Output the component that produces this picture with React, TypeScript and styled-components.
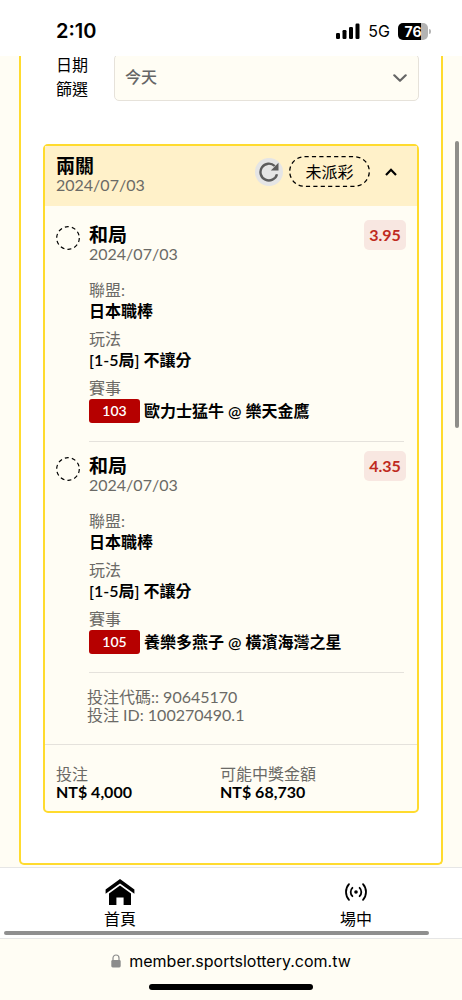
import React from "react";
import styled, { createGlobalStyle } from "styled-components";

const GlobalStyle = createGlobalStyle`
  *, *::before, *::after { box-sizing: border-box; }
  body {
    margin: 0;
    background: #fffdf4;
    color: #000;
    font-family: Lato, "Noto Sans CJK TC", sans-serif;
    font-size: 16px;
    line-height: 20px;
  }
  h2, h3, p, dl, dt, dd { margin: 0; font: inherit; }
  button, select { font: inherit; color: inherit; }
`;

const Screen = styled.div`
  position: relative;
  display: flex;
  flex-direction: column;
  min-height: 100vh;
`;

const StatusBar = styled.header`
  position: relative;
  z-index: 1;
  display: flex;
  align-items: center;
  justify-content: space-between;
  height: 56px;
  padding: 6px 34px 0 56px;
  background: #fff;
  font-family: Inter, sans-serif;
`;

const Clock = styled.time`
  font-size: 20px;
  font-weight: 600;
`;

const Indicators = styled.div`
  display: flex;
  align-items: center;
  gap: 8px;
`;

const Battery = styled.div`
  position: relative;
  width: 30px;
  height: 17px;
  border-radius: 5px;
  background: linear-gradient(to right, #000 76%, #b3b3b3 76%);
  color: #fff;
  font-size: 14px;
  font-weight: 700;
  line-height: 17px;
  text-align: center;

  &::after {
    content: "";
    position: absolute;
    top: 6px;
    right: -3px;
    width: 2px;
    height: 5px;
    border-radius: 0 2px 2px 0;
    background: #b3b3b3;
  }
`;

const Panel = styled.main`
  margin: -3px 19px 2px;
  padding: 0 22px 50px;
  border: 2px solid #ffdb2e;
  border-top: 0;
  border-radius: 0 0 5px 5px;
  background: #fff;
`;

const Filter = styled.div`
  display: flex;
  align-items: center;
  gap: 26px;
  margin-bottom: 43px;
  padding-left: 13px;
`;

const FilterLabel = styled.label`
  width: 32px;
  line-height: 24px;
`;

const SelectBox = styled.div`
  position: relative;
  flex: 1;

  svg {
    position: absolute;
    top: 18px;
    right: 12px;
    pointer-events: none;
  }
`;

const Select = styled.select`
  appearance: none;
  display: block;
  width: 100%;
  height: 47px;
  padding: 0 10px;
  border: 1px solid #e6e2da;
  border-radius: 5px;
  background: #fffdf4;
  color: #666;
  font-weight: 500;
`;

const Card = styled.article`
  border: 2px solid #ffdb2e;
  border-radius: 5px;
  background: #fffdf4;
`;

const CardHeader = styled.header`
  display: flex;
  align-items: flex-start;
  justify-content: space-between;
  height: 60px;
  padding: 10px 19px 0 11px;
  background: #fff1c9;
`;

const Title = styled.h2`
  font-size: 19px;
  font-weight: 700;
`;

const Muted = styled.p`
  color: #6b6a66;
  line-height: 18px;
`;

const Actions = styled.div`
  display: flex;
  align-items: center;
`;

const IconButton = styled.button<{ $round?: boolean }>`
  display: flex;
  align-items: center;
  justify-content: center;
  width: ${(p) => (p.$round ? "28px" : "14px")};
  height: 28px;
  padding: 0;
  border: 0;
  border-radius: 14px;
  background: ${(p) => (p.$round ? "#e5e5e5" : "none")};
`;

const Pill = styled.span`
  position: relative;
  width: 81px;
  margin: 0 14px 0 6px;
  line-height: 31px;
  text-align: center;

  svg {
    position: absolute;
    inset: 0;
    width: 100%;
    height: 100%;
  }
`;

const Bet = styled.section`
  display: grid;
  grid-template-columns: 33px 1fr;
  padding: 14px 13px 0 11px;

  & + & {
    padding-top: 9px;
  }
`;

const Ring = styled.svg`
  width: 24px;
  height: 24px;
  margin-top: 6px;
`;

const BetBody = styled.div`
  padding-bottom: 18px;
  border-bottom: 1px solid #e5e2dc;
`;

const BetHead = styled.div`
  display: flex;
  align-items: flex-start;
  justify-content: space-between;
  height: 59px;
  margin-right: -2px;
`;

const BetName = styled.div`
  padding-top: 5px;
`;

const Odds = styled.strong`
  width: 42px;
  border-radius: 5px;
  background: #f8e7e1;
  color: #bf2a20;
  line-height: 30px;
  text-align: center;
`;

const Facts = styled.dl`
  dt {
    color: #6b6a66;
    line-height: 22px;
  }
  dd {
    display: flex;
    align-items: center;
    gap: 4px;
    min-height: 20px;
    margin-bottom: 7px;
    font-weight: 600;
    line-height: 20px;
  }
  dd:last-child {
    margin: 0;
  }
`;

const Code = styled.span`
  width: 51px;
  border-radius: 3px;
  background: #b60000;
  color: #fff;
  font-size: 14px;
  line-height: 24px;
  text-align: center;
`;

const Reference = styled.div`
  padding: 15px 42px 20px;
  border-bottom: 1px solid #e5e2dc;
`;

const Totals = styled.dl`
  display: grid;
  grid-template-columns: 164px 1fr;
  padding: 20px 11px 10px;
  line-height: 18px;

  dt {
    color: #6b6a66;
  }
  dd {
    font-weight: 700;
  }
`;

const TabBar = styled.nav`
  position: relative;
  display: flex;
  height: 72px;
  padding-left: 2px;
  overflow: hidden;
  border-top: 1px solid #e6e6e6;
  border-bottom: 1px solid #e6e6e6;
  background: #fff;
`;

const Tab = styled.a`
  display: flex;
  flex: 0 0 236px;
  flex-direction: column;
  align-items: center;
  padding-top: 9px;
  color: #000;
  text-decoration: none;

  svg {
    margin-bottom: 2px;
  }
`;

const HorizontalThumb = styled.div`
  position: absolute;
  right: 33px;
  bottom: 3px;
  left: 4px;
  height: 4px;
  border-radius: 2px;
  background: #8f8f8f;
`;

const VerticalThumb = styled.div`
  position: absolute;
  top: 141px;
  right: 3px;
  width: 4px;
  height: 287px;
  border-radius: 2px;
  background: #8f8e8a;
`;

const AddressBar = styled.footer`
  display: flex;
  flex: 1;
  flex-direction: column;
  align-items: center;
  justify-content: space-between;
  min-height: 60px;
  padding: 12px 0 10px;
  font-family: Inter, sans-serif;
`;

const Address = styled.div`
  display: flex;
  align-items: center;
  gap: 8px;
`;

const HomeIndicator = styled.div`
  width: 164px;
  height: 6px;
  border-radius: 3px;
  background: #000;
`;

interface BetData {
  code: string;
  match: string;
  odds: string;
}

const bets: BetData[] = [
  { code: "103", match: "歐力士猛牛 @ 樂天金鷹", odds: "3.95" },
  { code: "105", match: "養樂多燕子 @ 橫濱海灣之星", odds: "4.35" },
];

const BetItem = ({ code, match, odds }: BetData) => (
  <Bet>
    <Ring viewBox="0 0 24 24" fill="none" stroke="#000" aria-hidden="true">
      <circle cx="12" cy="12" r="11.3" strokeWidth="1.2" strokeDasharray="4 3.1" />
    </Ring>
    <BetBody>
      <BetHead>
        <BetName>
          <Title as="h3">和局</Title>
          <Muted>2024/07/03</Muted>
        </BetName>
        <Odds>{odds}</Odds>
      </BetHead>
      <Facts>
        <dt>聯盟:</dt>
        <dd>日本職棒</dd>
        <dt>玩法</dt>
        <dd>[1-5局] 不讓分</dd>
        <dt>賽事</dt>
        <dd>
          <Code>{code}</Code>
          {match}
        </dd>
      </Facts>
    </BetBody>
  </Bet>
);

export default function App() {
  return (
    <Screen>
      <GlobalStyle />
      <StatusBar>
        <Clock>2:10</Clock>
        <Indicators>
          <svg width="24" height="16" viewBox="0 0 24 16" aria-hidden="true">
            <rect x="0" y="10" width="4" height="6" rx="1.2" />
            <rect x="6.5" y="7" width="4" height="9" rx="1.2" />
            <rect x="13" y="4" width="4" height="12" rx="1.2" />
            <rect x="19.5" y="0.5" width="4" height="15.5" rx="1.2" />
          </svg>
          <span>5G</span>
          <Battery>76</Battery>
        </Indicators>
      </StatusBar>

      <Panel>
        <Filter>
          <FilterLabel htmlFor="date">日期篩選</FilterLabel>
          <SelectBox>
            <Select id="date" defaultValue="today">
              <option value="today">今天</option>
            </Select>
            <svg width="14" height="14" viewBox="0 0 14 14" fill="none" stroke="#666" strokeWidth="2.2" strokeLinecap="round" strokeLinejoin="round" aria-hidden="true">
              <path d="M1.3 3.3 7 8.8l5.7-5.5" />
            </svg>
          </SelectBox>
        </Filter>

        <Card>
          <CardHeader>
            <div>
              <Title>兩關</Title>
              <Muted>2024/07/03</Muted>
            </div>
            <Actions>
              <IconButton $round aria-label="重新整理">
                <svg width="20" height="20" viewBox="0 0 20 20" fill="none" aria-hidden="true">
                  <path d="M18 12.2A8.4 8.4 0 1 1 15.7 4" stroke="#5c5c5c" strokeWidth="2.4" />
                  <path d="M19.5.8v7.7h-7.7z" fill="#5c5c5c" />
                </svg>
              </IconButton>
              <Pill>
                <svg viewBox="0 0 81 31" fill="none" aria-hidden="true">
                  <rect x="0.7" y="0.7" width="79.6" height="29.6" rx="14.8" stroke="#000" strokeWidth="1.3" strokeDasharray="4.2 3.2" />
                </svg>
                未派彩
              </Pill>
              <IconButton aria-label="收合" aria-expanded="true">
                <svg width="12" height="8" viewBox="0 0 12 8" fill="none" stroke="#000" strokeWidth="2.2" aria-hidden="true">
                  <path d="M1 7l5-5.2L11 7" />
                </svg>
              </IconButton>
            </Actions>
          </CardHeader>

          {bets.map((bet) => (
            <BetItem key={bet.code} {...bet} />
          ))}

          <Reference>
            <Muted>投注代碼:: 90645170</Muted>
            <Muted>投注 ID: 100270490.1</Muted>
          </Reference>

          <Totals>
            <div>
              <dt>投注</dt>
              <dd>NT$ 4,000</dd>
            </div>
            <div>
              <dt>可能中獎金額</dt>
              <dd>NT$ 68,730</dd>
            </div>
          </Totals>
        </Card>
      </Panel>

      <TabBar>
        <Tab href="#home">
          <svg width="30" height="30" viewBox="0 0 30 30" aria-hidden="true">
            <path d="M15 2 0.6 12.4v4.4L15 6.4l14.4 10.4v-4.4z" />
            <path d="M15 8.6 4 16.6V28h7.4v-7.6h7.2V28H26V16.6z" />
          </svg>
          首頁
        </Tab>
        <Tab href="#live">
          <svg width="30" height="30" viewBox="0 0 30 30" fill="none" stroke="#000" strokeWidth="1.8" strokeLinecap="round" aria-hidden="true">
            <circle cx="15" cy="15" r="1.8" fill="#000" stroke="none" />
            <path d="M11.4 10.8c-2.3 2.3-2.3 6.1 0 8.4M18.6 10.8c2.3 2.3 2.3 6.1 0 8.4M8 7.2c-4 4.4-4 11.2 0 15.6M22 7.2c4 4.4 4 11.2 0 15.6" />
          </svg>
          場中
        </Tab>
        <HorizontalThumb />
      </TabBar>

      <AddressBar>
        <Address>
          <svg width="10" height="14" viewBox="0 0 10 14" aria-hidden="true">
            <path d="M2 7V4a3 3 0 0 1 6 0v3" fill="none" stroke="#8c8c8c" strokeWidth="1.2" />
            <rect x="0.3" y="6" width="9.4" height="7.5" rx="1.4" fill="#8c8c8c" />
          </svg>
          member.sportslottery.com.tw
        </Address>
        <HomeIndicator />
      </AddressBar>

      <VerticalThumb />
    </Screen>
  );
}
